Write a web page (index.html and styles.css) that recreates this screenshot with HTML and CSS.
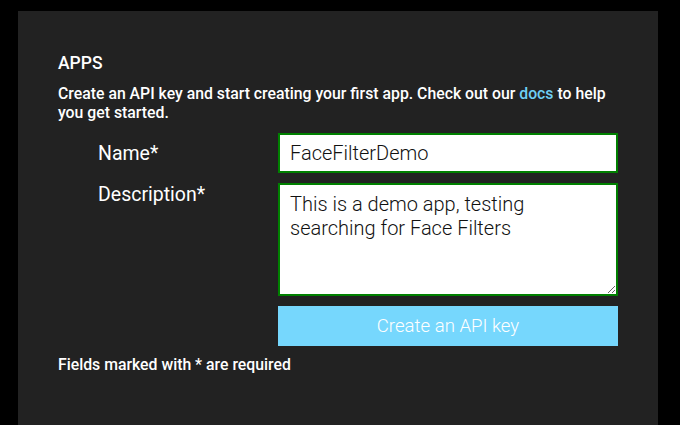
FILE: index.html
```html
<!DOCTYPE html>
<html lang="en">
<head>
<meta charset="utf-8">
<title>Apps</title>
<link rel="stylesheet" href="styles.css">
</head>
<body>
<div class="panel">
  <h2 class="title">APPS</h2>
  <p class="intro">Create an API key and start creating your first app. Check out our <a class="link" href="#">docs</a> to help you get started.</p>
  <form class="form">
    <label class="label label-center" for="name">Name*</label>
    <input class="field" id="name" type="text" value="FaceFilterDemo">
    <label class="label label-top" for="desc">Description*</label>
    <textarea class="field area" id="desc">This is a demo app, testing searching for Face Filters</textarea>
    <div class="spacer"></div>
    <button class="btn" type="button">Create an API key</button>
  </form>
  <p class="note">Fields marked with * are required</p>
</div>
</body>
</html>
```
FILE: styles.css
```css
html, body {
  margin: 0;
  padding: 0;
  background: #000;
  height: 100%;
  overflow: hidden;
}
body {
  font-family: Roboto, "Liberation Sans", sans-serif;
  color: #fff;
}
.panel {
  margin: 11px 0 0 18px;
  width: 640px;
  height: calc(100vh - 11px);
  box-sizing: border-box;
  padding: 42px 40px 0 40px;
  background: #222;
}
.title {
  margin: 0;
  font-size: 17.5px;
  line-height: 21px;
  font-weight: 500;
}
.intro {
  margin: 11px 0 0 0;
  font-size: 15.8px;
  line-height: 18.75px;
  font-weight: 500;
}
.link {
  color: #6fd0f5;
  text-decoration: none;
}
.form {
  margin-top: 10.5px;
  display: grid;
  grid-template-columns: 220px 340px;
  row-gap: 10px;
}
.label {
  padding-left: 40px;
  font-size: 19.5px;
  font-weight: 400;
}
.label-center {
  align-self: center;
}
.label-top {
  align-self: start;
}
.field {
  box-sizing: border-box;
  width: 340px;
  height: 40px;
  margin: 0;
  border: 2px solid #008000;
  border-radius: 0;
  background: #fff;
  color: #111;
  font-family: Roboto, "Liberation Sans", sans-serif;
  font-size: 20px;
  font-weight: 300;
  padding: 0 10px;
  outline: none;
}
.area {
  height: 113px;
  padding: 7px 10px;
  line-height: normal;
  resize: vertical;
  display: block;
}
.btn {
  height: 40px;
  margin: 0;
  border: none;
  border-radius: 0;
  background: #76d7fd;
  color: #fff;
  font-family: Roboto, "Liberation Sans", sans-serif;
  font-size: 18.6px;
  font-weight: 300;
  cursor: pointer;
}
.note {
  margin: 10px 0 0 0;
  font-size: 15.8px;
  line-height: 18.75px;
  font-weight: 500;
}
```
